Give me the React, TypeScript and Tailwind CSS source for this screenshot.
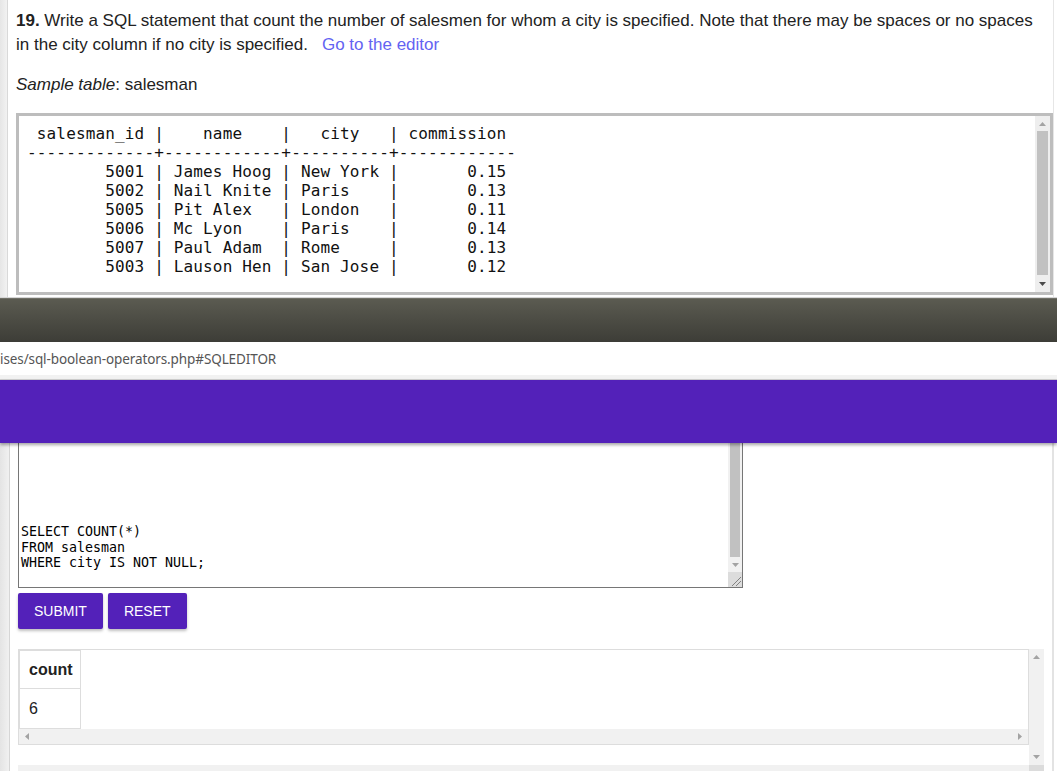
import React from "react";

const Tri = ({ dir, color }: { dir: "up" | "down" | "left" | "right"; color: string }) => {
  const pts: Record<string, string> = {
    up: "0,4 7,4 3.5,0",
    down: "0,0 7,0 3.5,4",
    left: "4,0 4,7 0,3.5",
    right: "0,0 0,7 4,3.5",
  };
  const w = dir === "up" || dir === "down" ? 7 : 4;
  const h = dir === "up" || dir === "down" ? 4 : 7;
  return (
    <svg width={w} height={h} viewBox={`0 0 ${w} ${h}`} className="block">
      <polygon points={pts[dir]} fill={color} />
    </svg>
  );
};

const preText = ` salesman_id |    name    |   city   | commission
-------------+------------+----------+------------
        5001 | James Hoog | New York |       0.15
        5002 | Nail Knite | Paris    |       0.13
        5005 | Pit Alex   | London   |       0.11
        5006 | Mc Lyon    | Paris    |       0.14
        5007 | Paul Adam  | Rome     |       0.13
        5003 | Lauson Hen | San Jose |       0.12`;

export default function App() {
  return (
    <div
      className="w-[1057px] h-[771px] overflow-hidden flex flex-col bg-white"
      style={{ fontFamily: '"Liberation Sans", Arial, sans-serif' }}
    >
      {/* Top section */}
      <div className="h-[297px] shrink-0 flex">
        <div className="w-[8px] shrink-0 bg-gradient-to-r from-[#e6e6e6] to-[#f2f2f2] border-r border-[#d9d9d9]" />
        <div className="flex-1 pl-[8px] pt-[9px] flex flex-col">
          <p className="text-[17px] leading-[24px] text-[#222]">
            <b>19.</b> Write a SQL statement that count the number of salesmen for whom a city is specified. Note that there may be spaces or no spaces
            <br />
            in the city column if no city is specified.
            <span className="ml-[14px] text-[#6363f2]">Go to the editor</span>
          </p>
          <p className="mt-[16px] text-[17px] leading-[24px] text-[#222]">
            <i>Sample table</i>: salesman
          </p>
          <div className="mt-[16px] h-[182px] w-[1037px] border-[3px] border-[#bdbdbd] flex">
            <div className="flex-1 bg-white pl-[8px] pt-[8px]">
              <pre
                className="text-[16px] leading-[19px] tracking-[0.15px] text-[#111] m-0"
                style={{ fontFamily: '"DejaVu Sans Mono", monospace' }}
              >
                {preText}
              </pre>
            </div>
            <div className="w-[15px] shrink-0 bg-[#eeeeee] flex flex-col">
              <div className="h-[15px] flex items-center justify-center">
                <Tri dir="up" color="#a3a3a3" />
              </div>
              <div className="flex-1 mx-[2px] bg-[#c1c1c1]" />
              <div className="h-[17px] flex items-center justify-center">
                <Tri dir="down" color="#4a4a4a" />
              </div>
            </div>
          </div>
        </div>
        <div className="w-[4px] shrink-0 border-l border-[#e6e6e6]" />
      </div>

      {/* Browser chrome */}
      <div className="h-[1px] shrink-0 bg-[#d6d6d6]" />
      <div className="h-[1px] shrink-0 bg-[#707067]" />
      <div className="h-[43px] shrink-0 bg-gradient-to-b from-[#5b5b51] to-[#3d3d37]" />
      <div className="h-[33px] shrink-0 bg-white flex items-center pt-[3px]">
        <span
          className="text-[13.5px] tracking-[-0.1px] text-[#555] leading-none"
          style={{ fontFamily: '"Noto Sans", Ubuntu, sans-serif' }}
        >
          ises/sql-boolean-operators.php#SQLEDITOR
        </span>
      </div>
      <div className="h-[4px] shrink-0 bg-[#f2f2f2]" />
      <div className="h-[1px] shrink-0 bg-[#cfcfcf]" />
      <div className="h-[63px] shrink-0 bg-[#5321b9] relative z-10 shadow-[0_2px_3px_rgba(0,0,0,0.35)]" />

      {/* Bottom section */}
      <div className="flex-1 flex min-h-0">
        <div className="w-[10px] shrink-0 bg-gradient-to-r from-[#e4e4e4] to-[#f1f1f1] border-r border-[#d6d6d6]" />
        <div className="flex-1 pl-[8px] flex flex-col">
          {/* textarea */}
          <div className="w-[725px] h-[145px] border-x border-b border-[#767676] flex shrink-0">
            <div className="flex-1 pl-[2px] pt-[81px]">
              <pre
                className="text-[13.3px] leading-[15.5px] text-[#000] m-0"
                style={{ fontFamily: '"DejaVu Sans Mono", monospace' }}
              >
                {"SELECT COUNT(*)\nFROM salesman\nWHERE city IS NOT NULL;"}
              </pre>
            </div>
            <div className="w-[14px] shrink-0 bg-[#f1f1f1] flex flex-col">
              <div className="flex-1 mx-[2px] bg-[#c1c1c1]" />
              <div className="h-[15px] flex items-center justify-center">
                <Tri dir="down" color="#a3a3a3" />
              </div>
              <div className="h-[15px] bg-[#dcdcdc] relative">
                <svg width="14" height="15" viewBox="0 0 14 15" className="absolute inset-0">
                  <line x1="4" y1="14" x2="13" y2="5" stroke="#6b6b6b" strokeWidth="0.8" />
                  <line x1="8" y1="14" x2="13" y2="9" stroke="#6b6b6b" strokeWidth="0.8" />
                </svg>
              </div>
            </div>
          </div>

          {/* buttons */}
          <div className="mt-[5px] flex gap-[5px] shrink-0">
            <div className="h-[36px] px-[16px] flex items-center rounded-[2px] bg-[#5321b9] text-white text-[14px] shadow-[0_2px_3px_rgba(0,0,0,0.25)]">
              SUBMIT
            </div>
            <div className="h-[36px] px-[16px] flex items-center rounded-[2px] bg-[#5321b9] text-white text-[14px] shadow-[0_2px_3px_rgba(0,0,0,0.25)]">
              RESET
            </div>
          </div>

          {/* result */}
          <div className="mt-[20px] flex shrink-0">
            <div className="w-[1011px] flex flex-col">
              <div className="border border-[#dddddd] flex flex-col">
                <div className="h-[79px] flex">
                  <div className="w-[62px] border border-[#dddddd] flex flex-col text-[16px] text-[#222]">
                    <div className="h-[38px] border-b border-[#dddddd] pl-[9px] flex items-center font-bold">count</div>
                    <div className="h-[38px] pl-[9px] pt-[1px] flex items-center">6</div>
                  </div>
                </div>
                <div className="h-[15px] bg-[#f1f1f1] flex items-center justify-between pl-[6px] pr-[6px]">
                  <Tri dir="left" color="#a3a3a3" />
                  <Tri dir="right" color="#a3a3a3" />
                </div>
              </div>
              <div className="h-[20px]" />
              <div className="h-[16px] bg-[#f1f1f1] flex items-end pl-[6px]">
                <Tri dir="left" color="#a3a3a3" />
              </div>
            </div>
            <div className="w-[15px] shrink-0 flex flex-col">
              <div className="h-[116px] bg-[#f1f1f1] flex flex-col justify-between items-center pt-[6px] pb-[6px]">
                <Tri dir="up" color="#a3a3a3" />
                <Tri dir="down" color="#a3a3a3" />
              </div>
              <div className="flex-1 bg-[#dcdcdc]" />
            </div>
          </div>
        </div>
        <div className="w-[5px] shrink-0 border-l-2 border-[#e3e3e3]" />
      </div>
    </div>
  );
}
